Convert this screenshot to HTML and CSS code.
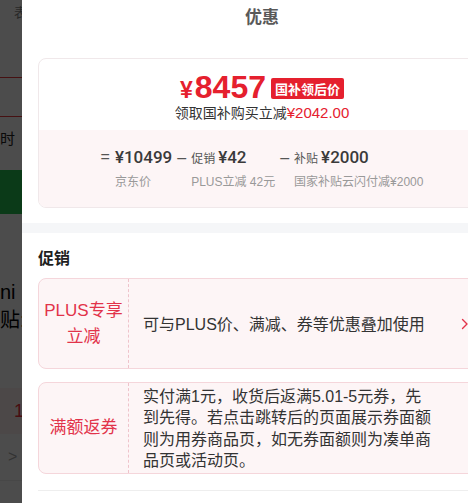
FILE: index.html
```html
<!DOCTYPE html>
<html lang="zh-CN">
<head>
    <meta charset="UTF-8">
    <meta name="viewport" content="width=device-width, initial-scale=1.0">
    <title>优惠</title>
    <link rel="stylesheet" href="styles.css">
</head>
<body>
    <!-- product page underneath the sheet -->
    <div class="page">
        <div class="page-nav"><span class="nav-icon">表</span></div>
        <div class="page-tabs"></div>
        <div class="page-row">时</div>
        <div class="page-btn"></div>
        <div class="page-name">ni<br>贴:</div>
        <div class="page-price">1</div>
        <div class="page-more">&gt;</div>
        <div class="page-foot"></div>
    </div>
    <div class="mask"></div>

    <div class="sheet">
        <div class="sheet-head">优惠</div>

        <div class="price-card">
            <div class="price-top">
                <div class="price-line">
                    <span class="price"><span class="yen">¥</span>8457</span>
                    <span class="price-tag">国补领后价</span>
                </div>
                <div class="price-sub">领取国补购买立减<span class="red">¥2042.00</span></div>
            </div>
            <div class="calc">
                <div class="calc-item">
                    <span class="op">=</span>
                    <span class="val">¥10499</span>
                    <span class="lbl">京东价</span>
                </div>
                <div class="calc-item">
                    <span class="op">–</span>
                    <span class="val"><small>促销</small>¥42</span>
                    <span class="lbl">PLUS立减 42元</span>
                </div>
                <div class="calc-item">
                    <span class="op">–</span>
                    <span class="val"><small>补贴</small>¥2000</span>
                    <span class="lbl">国家补贴云闪付减¥2000</span>
                </div>
            </div>
        </div>

        <div class="band"></div>

        <div class="section-title">促销</div>

        <div class="promo">
            <div class="promo-tag">PLUS专享<br>立减</div>
            <div class="promo-text">可与PLUS价、满减、券等优惠叠加使用</div>
            <svg class="promo-arrow" width="8" height="12" viewBox="0 0 8 12" fill="none" stroke="currentColor" stroke-width="1.4" stroke-linecap="round" stroke-linejoin="round">
                <polyline points="1.5,1.5 6,6 1.5,10.5"></polyline>
            </svg>
        </div>

        <div class="promo">
            <div class="promo-tag">满额返券</div>
            <div class="promo-text">实付满1元，收货后返满5.01-5元券，先到先得。若点击跳转后的页面展示券面额则为用券商品页，如无券面额则为凑单商品页或活动页。</div>
        </div>

        <div class="section-line"></div>
    </div>
</body>
</html>
```
FILE: styles.css
```css
:root {
    --red: #e5202e;
    --tag-red: #e2334a;
    --text: #333333;
    --muted: #999999;
    --pink-bg: #fdf5f6;
    --pink-border: #f5d6db;
}

body {
    margin: 0;
    width: 468px;
    height: 503px;
    overflow: hidden;
    font-family: "Liberation Sans", "Noto Sans CJK SC", sans-serif;
    color: var(--text);
    background: #fff;
}

/* page behind */
.page {
    width: 468px;
}

.page-nav {
    height: 77px;
    border-bottom: 1px solid #e93b3d;
}

.nav-icon {
    display: block;
    padding: 2px 0 0 14px;
    font-size: 13px;
    color: #888;
}

.page-tabs {
    height: 38px;
    border-bottom: 1px solid #e93b3d;
}

.page-row {
    height: 53px;
    line-height: 44px;
    font-size: 15px;
    color: #222;
}

.page-btn {
    height: 44px;
    background: #25c152;
}

.page-name {
    padding-top: 64px;
    font-size: 20px;
    line-height: 28px;
    color: #000;
    height: 110px;
}

.page-price {
    height: 46px;
    line-height: 46px;
    padding-left: 14px;
    background: #fff2f2;
    color: #f2303a;
    font-size: 18px;
}

.page-more {
    height: 46px;
    line-height: 46px;
    padding-left: 8px;
    color: #aaa;
    font-size: 16px;
}

.page-foot {
    border-top: 1px solid #eee;
}

.mask {
    position: fixed;
    inset: 0;
    background: rgba(0, 0, 0, 0.7);
}

/* sheet */
.sheet {
    position: fixed;
    top: 0;
    bottom: 0;
    left: 22px;
    width: 480px;
    background: #fff;
    overflow: hidden;
}

.sheet-head {
    height: 32px;
    line-height: 32px;
    text-align: center;
    font-family: "Noto Sans CJK SC", sans-serif;
    font-size: 17px;
    font-weight: bold;
    color: #595959;
}

.price-card {
    margin: 26px 16px 0;
    border: 1px solid #f0e8ea;
    border-radius: 8px;
    overflow: hidden;
}

.price-top {
    height: 71px;
    padding-top: 13px;
    box-sizing: border-box;
    text-align: center;
}

.price-line {
    display: flex;
    justify-content: center;
    align-items: center;
    height: 32px;
}

.price {
    color: var(--red);
    font-size: 32px;
    font-weight: bold;
    line-height: 32px;
}

.yen {
    font-size: 23px;
    margin-right: 2px;
}

.price-tag {
    margin-left: 5px;
    padding: 0 4px;
    height: 21px;
    line-height: 21px;
    border-radius: 2px;
    background: var(--red);
    color: #fff;
    font-size: 13px;
    font-weight: bold;
    font-family: "Noto Sans CJK SC", sans-serif;
}

.price-sub {
    font-size: 14px;
    line-height: 18px;
    color: #333;
}

.price-sub .red {
    color: var(--red);
    font-size: 15px;
}

.calc {
    display: flex;
    justify-content: center;
    gap: 5px;
    padding: 15px 0 17px;
    background: var(--pink-bg);
}

.calc-item {
    display: grid;
    grid-template-columns: auto auto;
    column-gap: 5px;
    row-gap: 4px;
    align-items: center;
}

.op {
    font-size: 16px;
    line-height: 24px;
    color: #555;
}

.val {
    font-family: Roboto, "Noto Sans CJK SC", sans-serif;
    font-weight: 500;
    font-size: 17px;
    line-height: 24px;
    color: #3a3a3a;
}

.val small {
    font-family: "Noto Sans CJK SC", sans-serif;
    font-weight: normal;
    font-size: 12px;
    color: #555;
    margin-right: 3px;
}

.lbl {
    grid-column: 2;
    font-size: 12px;
    line-height: 16px;
    color: var(--muted);
}

.band {
    height: 10px;
    margin-top: 15px;
    background: #f5f6f8;
}

.section-title {
    margin: 13px 16px 10px;
    font-family: "Noto Sans CJK SC", sans-serif;
    font-size: 16px;
    line-height: 22px;
    font-weight: bold;
    color: #1f1f1f;
}

.promo {
    position: relative;
    display: flex;
    min-height: 89px;
    margin: 0 16px 13px;
    border: 1px solid var(--pink-border);
    border-radius: 8px;
    background: var(--pink-bg);
}

.promo-tag {
    width: 89px;
    flex: none;
    display: flex;
    align-items: center;
    justify-content: center;
    text-align: center;
    border-right: 1px dashed #efc3cb;
    font-size: 17px;
    line-height: 26px;
    color: var(--tag-red);
}

.promo-text {
    flex: 1;
    display: flex;
    align-items: center;
    padding: 3px 52px 1px 14px;
    font-size: 16px;
    line-height: 21.4px;
    color: #333;
}

.promo-arrow {
    position: absolute;
    right: 16px;
    top: 50%;
    margin-top: -6px;
    color: var(--tag-red);
}

.section-line {
    margin: 16px 0 0 16px;
    border-top: 1px solid #eeeeee;
}
```
